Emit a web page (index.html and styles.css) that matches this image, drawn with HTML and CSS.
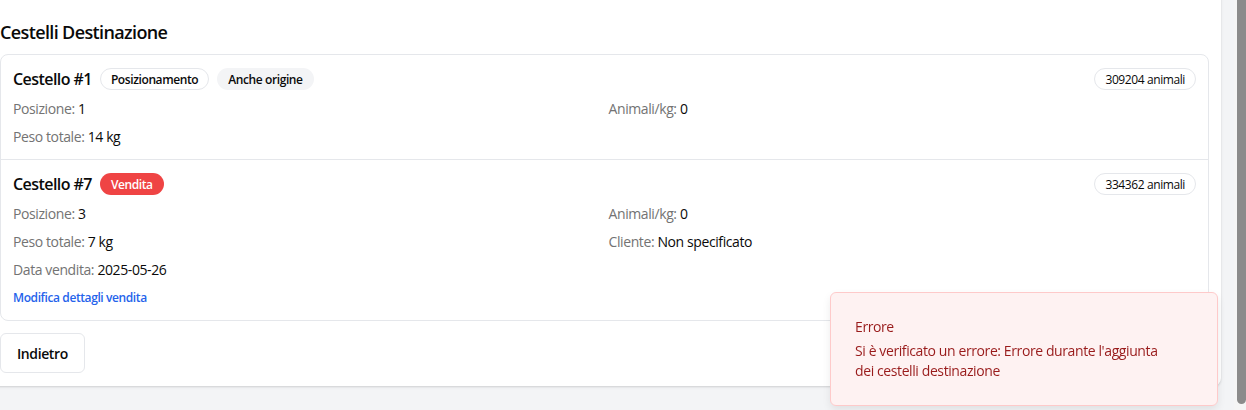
FILE: index.html
```html
<!DOCTYPE html>
<html lang="it">
<head>
<meta charset="utf-8">
<title>Cestelli Destinazione</title>
<link rel="stylesheet" href="styles.css">
</head>
<body>
<div class="page">
  <section class="panel">
    <h2 class="panel-title">Cestelli Destinazione</h2>
    <div class="list">
      <div class="item">
        <div class="item-head">
          <div class="item-title">
            <span class="name">Cestello #1</span>
            <span class="badge badge-outline">Posizionamento</span>
            <span class="badge badge-secondary">Anche origine</span>
          </div>
          <span class="badge badge-outline badge-count">309204 animali</span>
        </div>
        <div class="details">
          <div class="field"><span class="label">Posizione:</span> 1</div>
          <div class="field"><span class="label">Animali/kg:</span> 0</div>
          <div class="field"><span class="label">Peso totale:</span> 14 kg</div>
        </div>
      </div>
      <div class="item">
        <div class="item-head">
          <div class="item-title">
            <span class="name">Cestello #7</span>
            <span class="badge badge-danger">Vendita</span>
          </div>
          <span class="badge badge-outline badge-count">334362 animali</span>
        </div>
        <div class="details">
          <div class="field"><span class="label">Posizione:</span> 3</div>
          <div class="field"><span class="label">Animali/kg:</span> 0</div>
          <div class="field"><span class="label">Peso totale:</span> 7 kg</div>
          <div class="field"><span class="label">Cliente:</span> Non specificato</div>
          <div class="field"><span class="label">Data vendita:</span> 2025-05-26</div>
        </div>
        <a class="link" href="#">Modifica dettagli vendita</a>
      </div>
    </div>
    <div class="actions">
      <button class="btn" type="button">Indietro</button>
    </div>
  </section>
</div>
<div class="scrollbar"><div class="thumb"></div></div>
<div class="toast" role="alert">
  <div class="toast-title">Errore</div>
  <div class="toast-desc">Si è verificato un errore: Errore durante l'aggiunta dei cestelli destinazione</div>
</div>
</body>
</html>
```
FILE: styles.css
```css
* { box-sizing: border-box; }
html, body { height: 100%; }
body {
  margin: 0;
  background: #f3f4f6;
  font-family: "Open Sans", "Noto Sans", sans-serif;
  letter-spacing: -0.025em;
  color: #0a0a0a;
  display: flex;
  overflow: hidden;
}
.page {
  flex: 1;
  padding-right: 13px;
}
.panel {
  background: #fff;
  margin: -12px 0 0 -12px;
  padding: 30px 12px 13px 12px;
  border-radius: 8px;
  box-shadow: 0 1px 3px rgba(0,0,0,0.1), 0 1px 2px rgba(0,0,0,0.06);
}
.panel-title {
  margin: 0 0 8px;
  font-size: 18px;
  line-height: 28px;
  font-weight: 600;
  letter-spacing: -0.035em;
}
.list {
  border: 1px solid #e5e7eb;
  border-radius: 8px;
}
.item {
  padding: 12px;
}
.item + .item { border-top: 1px solid #e5e7eb; }
.item-head {
  display: flex;
  justify-content: space-between;
  align-items: center;
  height: 24px;
}
.item-title {
  display: flex;
  align-items: center;
  gap: 8px;
}
.name {
  font-size: 16px;
  font-weight: 600;
  line-height: 24px;
  letter-spacing: -0.035em;
}
.badge {
  display: inline-flex;
  align-items: center;
  height: 22px;
  padding: 0 10px;
  border-radius: 999px;
  font-size: 12px;
  font-weight: 600;
  border: 1px solid transparent;
}
.badge-outline { border-color: #e5e7eb; background: #fff; }
.badge-secondary { background: #f3f4f6; }
.badge-danger { background: #ef4444; color: #fff; }
.badge-count { font-weight: 500; }
.details {
  display: grid;
  grid-template-columns: 1fr 1fr;
  gap: 8px;
  margin-top: 8px;
  font-size: 14px;
  line-height: 20px;
}
.label { color: #737373; }
.link {
  display: block;
  margin-top: 8px;
  font-size: 12px;
  line-height: 20px;
  font-weight: 600;
  color: #2563eb;
  text-decoration: none;
}
.actions {
  margin-top: 12px;
  display: flex;
}
.btn {
  height: 40px;
  padding: 0 16px;
  border: 1px solid #e5e7eb;
  border-radius: 6px;
  background: #fff;
  font-family: inherit;
  letter-spacing: inherit;
  font-size: 14px;
  font-weight: 600;
  color: #0a0a0a;
}
.scrollbar {
  width: 12px;
  background: #f5f5f5;
  display: flex;
  justify-content: flex-end;
}
.thumb {
  width: 9px;
  height: 404px;
  background: #8b8b8b;
  border-radius: 0 0 5px 5px;
}
.toast {
  position: fixed;
  left: 830px;
  top: 292px;
  width: 388px;
  padding: 24px 44px 24px 24px;
  background: #fef2f2;
  border: 1px solid #fecaca;
  border-radius: 6px;
  color: #991b1b;
  box-shadow: 0 4px 8px rgba(0,0,0,0.08);
  font-size: 14px;
  line-height: 20px;
}
.toast-title { font-weight: 500; }
.toast-desc { margin-top: 4px; font-weight: 500; }
```
